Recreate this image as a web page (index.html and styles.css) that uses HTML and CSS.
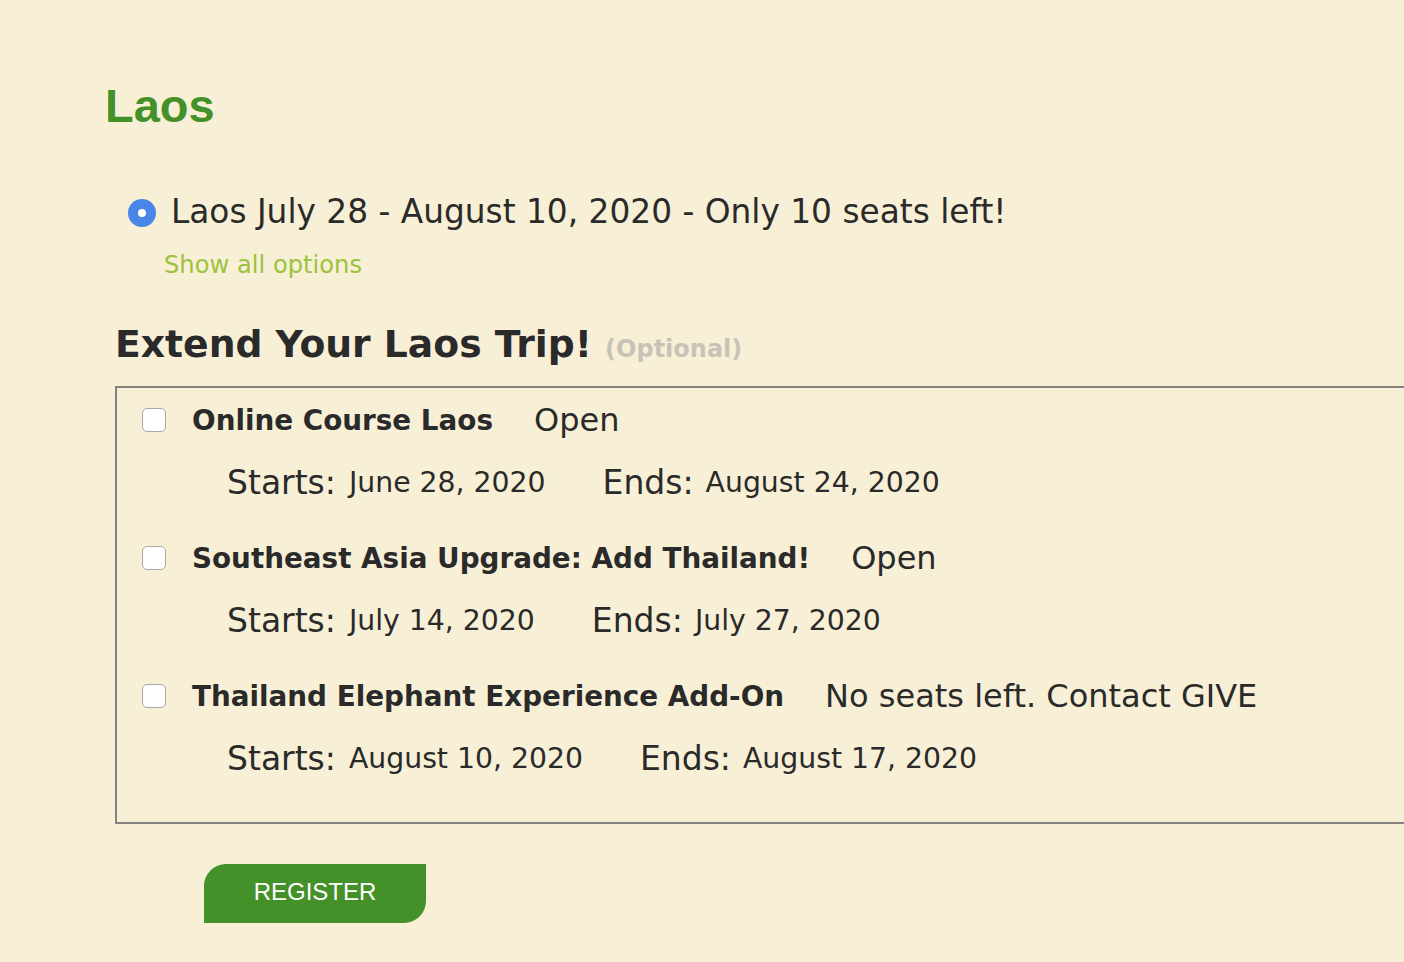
FILE: index.html
```html
<!DOCTYPE html>
<html>
<head>
<meta charset="utf-8">
<link rel="stylesheet" href="styles.css">
</head>
<body>
<div class="page">
  <h1 class="country">Laos</h1>
  <div class="trip-option">
    <label class="trip-label"><input type="radio" class="radio" checked><span>Laos July 28 - August 10, 2020 - Only 10 seats left!</span></label>
    <a class="show-all">Show all options</a>
  </div>
  <h2 class="extend">Extend Your Laos Trip! <span class="optional">(Optional)</span></h2>
  <div class="addons">
    <div class="addon">
      <div class="addon-head"><input type="checkbox" class="check"><span class="addon-name">Online Course Laos</span><span class="addon-status">Open</span></div>
      <div class="addon-dates"><span class="lbl">Starts:</span><span class="date">June 28, 2020</span><span class="lbl ends">Ends:</span><span class="date">August 24, 2020</span></div>
    </div>
    <div class="addon">
      <div class="addon-head"><input type="checkbox" class="check"><span class="addon-name">Southeast Asia Upgrade: Add Thailand!</span><span class="addon-status">Open</span></div>
      <div class="addon-dates"><span class="lbl">Starts:</span><span class="date">July 14, 2020</span><span class="lbl ends">Ends:</span><span class="date">July 27, 2020</span></div>
    </div>
    <div class="addon">
      <div class="addon-head"><input type="checkbox" class="check"><span class="addon-name">Thailand Elephant Experience Add-On</span><span class="addon-status">No seats left. Contact GIVE</span></div>
      <div class="addon-dates"><span class="lbl">Starts:</span><span class="date">August 10, 2020</span><span class="lbl ends">Ends:</span><span class="date">August 17, 2020</span></div>
    </div>
  </div>
  <button class="register">REGISTER</button>
</div>
</body>
</html>
```
FILE: styles.css
```css
html, body {
  margin: 0;
  padding: 0;
  background: #f8f0d6;
}
body {
  font-family: "DejaVu Sans", Verdana, sans-serif;
  color: #2a2a2a;
}
.page {
  padding: 78px 0 0 105px;
}
.country {
  margin: 0;
  font-family: "Liberation Sans", Arial, sans-serif;
  font-weight: bold;
  font-size: 47px;
  line-height: 56px;
  color: #459129;
}
.trip-option {
  margin: 56px 0 0 23px;
}
.trip-label {
  display: flex;
  align-items: center;
  font-size: 32.8px;
  line-height: 44px;
}
.radio {
  appearance: none;
  -webkit-appearance: none;
  margin: 2px 15px 0 0;
  width: 28px;
  height: 28px;
  border-radius: 50%;
  background: #4a86e8;
  position: relative;
  flex: none;
}
.radio::after {
  content: "";
  position: absolute;
  left: 10px;
  top: 10px;
  width: 8px;
  height: 8px;
  border-radius: 50%;
  background: #fff;
}
.show-all {
  display: block;
  margin: 16px 0 0 36px;
  font-size: 24.2px;
  line-height: 30px;
  color: #9cc23f;
}
.extend {
  margin: 40px 0 0 10px;
  font-size: 37.7px;
  line-height: 48px;
  font-weight: bold;
  color: #2a2a2a;
}
.optional {
  font-size: 24px;
  color: #c8c3b6;
}
.addons {
  margin: 13px 0 0 10px;
  border: 2px solid #858280;
  border-right: none;
  padding: 12px 0 42px 25px;
}
.addon + .addon {
  margin-top: 34px;
}
.addon-head {
  display: flex;
  align-items: center;
  height: 40px;
}
.check {
  appearance: none;
  -webkit-appearance: none;
  margin: 0 26px 0 0;
  width: 24px;
  height: 24px;
  background: #fff;
  border: 1px solid #a8a8a8;
  border-radius: 5px;
  flex: none;
}
.addon-name {
  font-weight: bold;
  font-size: 27.8px;
}
.addon-status {
  margin-left: 41px;
  font-size: 32px;
}
.addon-dates {
  margin: 20px 0 0 85px;
  height: 44px;
  display: flex;
  align-items: center;
}
.lbl {
  font-size: 33px;
  margin-right: 13px;
}
.date {
  font-size: 28.3px;
}
.lbl.ends {
  margin-left: 57px;
  margin-right: 12px;
}
.register {
  display: block;
  margin: 40px 0 0 99px;
  width: 222px;
  height: 59px;
  border: none;
  background: #459129;
  color: #fff;
  font-family: "Liberation Sans", Arial, sans-serif;
  font-size: 24px;
  border-radius: 22px 0 22px 0;
  padding: 0 0 4px 0;
}
```
